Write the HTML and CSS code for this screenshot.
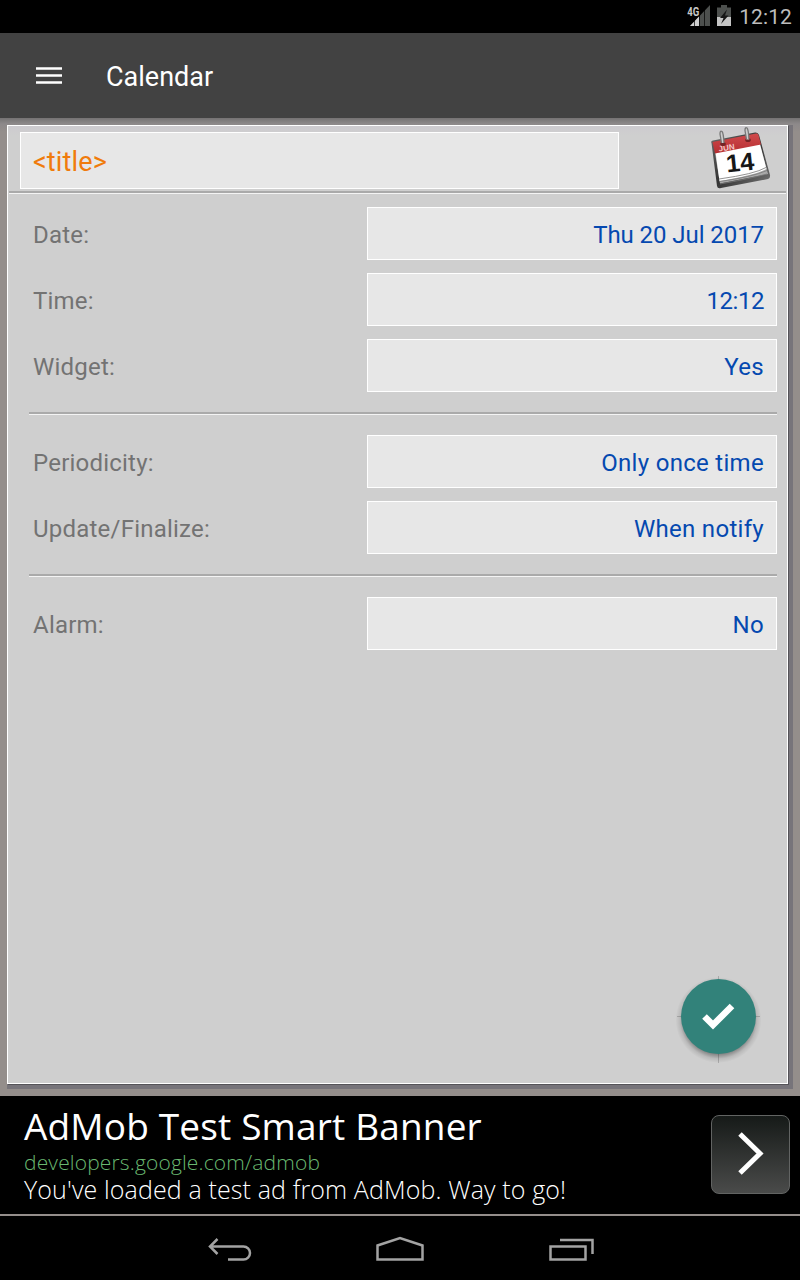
FILE: index.html
```html
<!DOCTYPE html>
<html lang="en">
<head>
<meta charset="utf-8">
<title>Calendar</title>
<link rel="stylesheet" href="styles.css">
</head>
<body>
<div class="screen">
  <header class="status">
    <svg class="signal" width="24" height="24" viewBox="0 0 24 24">
      <path d="M3 23L23 2V23Z" fill="#4d504e"/>
      <path d="M3 23L12 13.500V23Z" fill="#d0d0d0"/>
      <path d="M7.500 12V23M12.500 8V23M17.500 4V23" stroke="#000" stroke-width="0.700"/>
      <text x="0.3" y="12.500" class="net" textLength="12" lengthAdjust="spacingAndGlyphs">4G</text>
    </svg>
    <svg class="battery" width="14" height="21" viewBox="0 0 14 21">
      <path d="M0 2.500H4V0H10V2.500H14V21H0Z" fill="#4d504e"/>
      <path d="M0 12H14V21H0Z" fill="#c4c4c4"/>
      <path d="M10 4.500L3 13H6.500L4 19L11.500 10.500H8Z" fill="#161616"/>
    </svg>
    <span class="clock">12:12</span>
  </header>
  <div class="appbar">
    <svg class="menu" width="26" height="17" viewBox="0 0 26 17"><path d="M0 1.500H26M0 8.500H26M0 15.500H26" stroke="#fff" stroke-width="2.500"/></svg>
    <span class="heading">Calendar</span>
  </div>
  <main class="content">
    <section class="panel">
      <div class="titlebar">
        <div class="title-field"><span>&lt;title&gt;</span></div>
        <svg class="cal" width="62" height="64" viewBox="0 0 62 64">
          <defs>
            <linearGradient id="red" x1="0" y1="0" x2="0" y2="1"><stop offset="0" stop-color="#d04a4c"/><stop offset="1" stop-color="#b52e31"/></linearGradient>
            <linearGradient id="edge" x1="0" y1="0" x2="1" y2="1"><stop offset="0" stop-color="#6b6b6b"/><stop offset="0.500" stop-color="#333"/><stop offset="1" stop-color="#777"/></linearGradient>
          </defs>
          <path d="M2.500 17Q1.500 15 4 14.500L46 6.500Q49 6 50 9L61 49Q61.500 52 59 53L12 62Q8.500 63 8 60Z" fill="url(#edge)"/>
          <path d="M6 27L51 19L59 48L11 57.500Z" fill="#aaa"/>
          <path d="M6.500 26L51 18L57.500 43Q47 49 10.500 55Z" fill="#fff"/>
          <path d="M10 53Q46 48 57 41.500M10.500 55.500Q43 51 58 44.500M11 58Q40 53 58 48" fill="none" stroke="#777" stroke-width="0.800"/>
          <path d="M3.500 16L47 7.500Q49 7 49.500 9L52 18.500L6 27.500Z" fill="url(#red)"/>
          <text class="month" transform="translate(10 25.500) rotate(-8)">JUN</text>
          <text class="day" transform="translate(18 46.500) rotate(-6)" textLength="28" lengthAdjust="spacingAndGlyphs">14</text>
          <ellipse cx="14" cy="18" rx="2.800" ry="2" fill="#752325"/><ellipse cx="39" cy="14" rx="2.800" ry="2" fill="#752325"/>
          <path d="M12.500 17L11 8Q11 4 13 5.500Q14.500 7 15 17M37.500 13.500L36 4.500Q36 0.800 38 2Q39.500 3.500 40 13.500" fill="#ccc" stroke="#777" stroke-width="1.300"/>
        </svg>
      </div>
      <div class="form">
        <div class="row"><span class="label">Date:</span><span class="value date">Thu 20 Jul 2017</span></div>
        <div class="row"><span class="label">Time:</span><span class="value time">12:12</span></div>
        <div class="row"><span class="label">Widget:</span><span class="value">Yes</span></div>
        <div class="rule"></div>
        <div class="row"><span class="label">Periodicity:</span><span class="value">Only once time</span></div>
        <div class="row"><span class="label">Update/Finalize:</span><span class="value">When notify</span></div>
        <div class="rule"></div>
        <div class="row"><span class="label">Alarm:</span><span class="value">No</span></div>
      </div>
      <svg class="fab" width="90" height="90" viewBox="0 0 90 90">
        <defs><radialGradient id="shade"><stop offset="0.780" stop-color="#000" stop-opacity="0.380"/><stop offset="0.900" stop-color="#000" stop-opacity="0.100"/><stop offset="1" stop-color="#000" stop-opacity="0"/></radialGradient></defs>
        <circle cx="45.500" cy="45" r="43" fill="url(#shade)"/>
        <path d="M45.500 1V4M45.500 79V88M4 41.500H8M83 41.500H87" stroke="#000" stroke-opacity="0.180"/>
        <circle cx="45.500" cy="41.500" r="37.500" fill="#32827a"/>
        <path d="M31.500 41.500L40 50L59 31" fill="none" stroke="#fff" stroke-width="6.500"/>
      </svg>
    </section>
  </main>
  <aside class="ad">
    <div class="ad-copy">
      <div class="ad-title"><span>AdMob Test Smart Banner</span></div>
      <div class="ad-link"><span>developers.google.com/admob</span></div>
      <div class="ad-text"><span>You've loaded a test ad from AdMob. Way to go!</span></div>
    </div>
    <div class="ad-go"><svg width="26" height="44" viewBox="0 0 26 44"><path d="M2 2L22 21.500L2 41" fill="none" stroke="#fff" stroke-width="5"/></svg></div>
  </aside>
  <nav class="nav">
    <svg width="800" height="64" viewBox="0 0 800 64" fill="none" stroke="#a3a3a3" stroke-width="2.500">
      <path d="M210 30.500H243.500A6.500 6.500 0 0 1 243.500 43.500H228M217.500 23L210 30.500L217.500 38"/>
      <path d="M377.500 43.500V29.500L400 22L422.500 29.500V43.500Z"/>
      <path d="M550.500 30.500H585.500V43.500H550.500ZM560 24H592.500V38"/>
    </svg>
  </nav>
</div>
</body>
</html>
```
FILE: styles.css
```css
* { box-sizing: border-box; }
body { margin: 0; background: #000; font-family: Roboto, sans-serif; }
svg { display: block; flex: none; }
.screen { width: 800px; height: 1280px; display: flex; flex-direction: column; overflow: hidden; background: #948e8b; }
.status { height: 33px; flex: none; background: #000; display: flex; justify-content: flex-end; align-items: flex-start; padding: 3px 8px 0 0; }
.net { font: bold 13px Roboto, sans-serif; fill: #c8c8c8; stroke: #000; stroke-width: 2px; paint-order: stroke; }
.battery { margin: 2px 8px 0 6px; }
.clock { font-size: 21px; line-height: 29px; letter-spacing: 0.1px; color: #bdbdbd; }
.appbar { height: 85px; flex: none; background: #424242; display: flex; align-items: center; padding-left: 36px; }
.heading { margin-left: 44px; font-size: 27px; color: #fff; padding-top: 2px; }
.content { height: 978px; flex: none; padding: 7px 0 0 7px; background: linear-gradient(#757373, #8d898a 6px, #948e8b 14px); }
.panel { position: relative; width: 781px; height: 959px; background: #cfcfcf; border: 1px solid #fff; box-shadow: 1px 1px 0 #555358, 5px 0 0 #77747a, 0 5px 0 #77747a, 5px 5px 0 #77747a; }
.titlebar { height: 68px; margin: 0 1px; border-bottom: 1px solid #f4f4f4; box-shadow: inset 0 -2px 0 #aaa; display: flex; padding: 6px 0 0 11px; background: linear-gradient(#cdcacf, #cfcfcf 10px); }
.title-field { width: 599px; height: 57px; border: 1px solid #fff; background: #e7e7e7; color: #f07b0c; font-size: 27px; line-height: 58px; letter-spacing: 0.15px; padding-left: 12px; }
.cal { margin: -6px 0 0 90px; }
.month { font: bold 8px "Liberation Sans", sans-serif; fill: #f3caca; }
.day { font: bold 25px "Liberation Sans", sans-serif; fill: #171717; }
.form { padding: 13px 10px 0 21px; }
.row { display: flex; justify-content: space-between; height: 53px; margin-bottom: 13px; font-size: 24px; line-height: 57px; }
.label { color: #737373; padding-left: 4px; letter-spacing: 0.22px; }
.value { width: 410px; border: 1px solid #fff; background: #e7e7e7; color: #0549b0; text-align: right; padding-right: 12px; line-height: 55px; letter-spacing: 0.3px; }
.date { letter-spacing: -0.07px; }
.time { letter-spacing: -0.45px; padding-right: 12px; }
.rule { height: 3px; margin: 20px 0; background: #aaa; border-bottom: 1px solid #f4f4f4; }
.fab { position: absolute; left: 665px; top: 849px; }
.ad { height: 118px; flex: none; background: #000; display: flex; justify-content: space-between; padding: 0 10px 0 24px; font-family: "Open Sans", sans-serif; white-space: nowrap; }
.ad-title { font-size: 37px; line-height: 40px; margin-top: 10px; color: #fff; letter-spacing: 0.16px; }
.ad-link { font-size: 21px; line-height: 26px; margin-top: 3px; color: #69b870; font-weight: 300; letter-spacing: 0.15px; }
.ad-text { font-size: 25px; line-height: 28px; color: #fff; font-weight: 300; letter-spacing: 0.13px; }
.ad-go { width: 79px; height: 79px; margin-top: 19px; border: 1px solid #626463; border-radius: 8px; background: linear-gradient(#161a18, #4a4b4a); padding: 16px 0 0 26px; }
.nav { height: 66px; flex: none; background: #000; border-top: 2px solid #948e8b; }
```
